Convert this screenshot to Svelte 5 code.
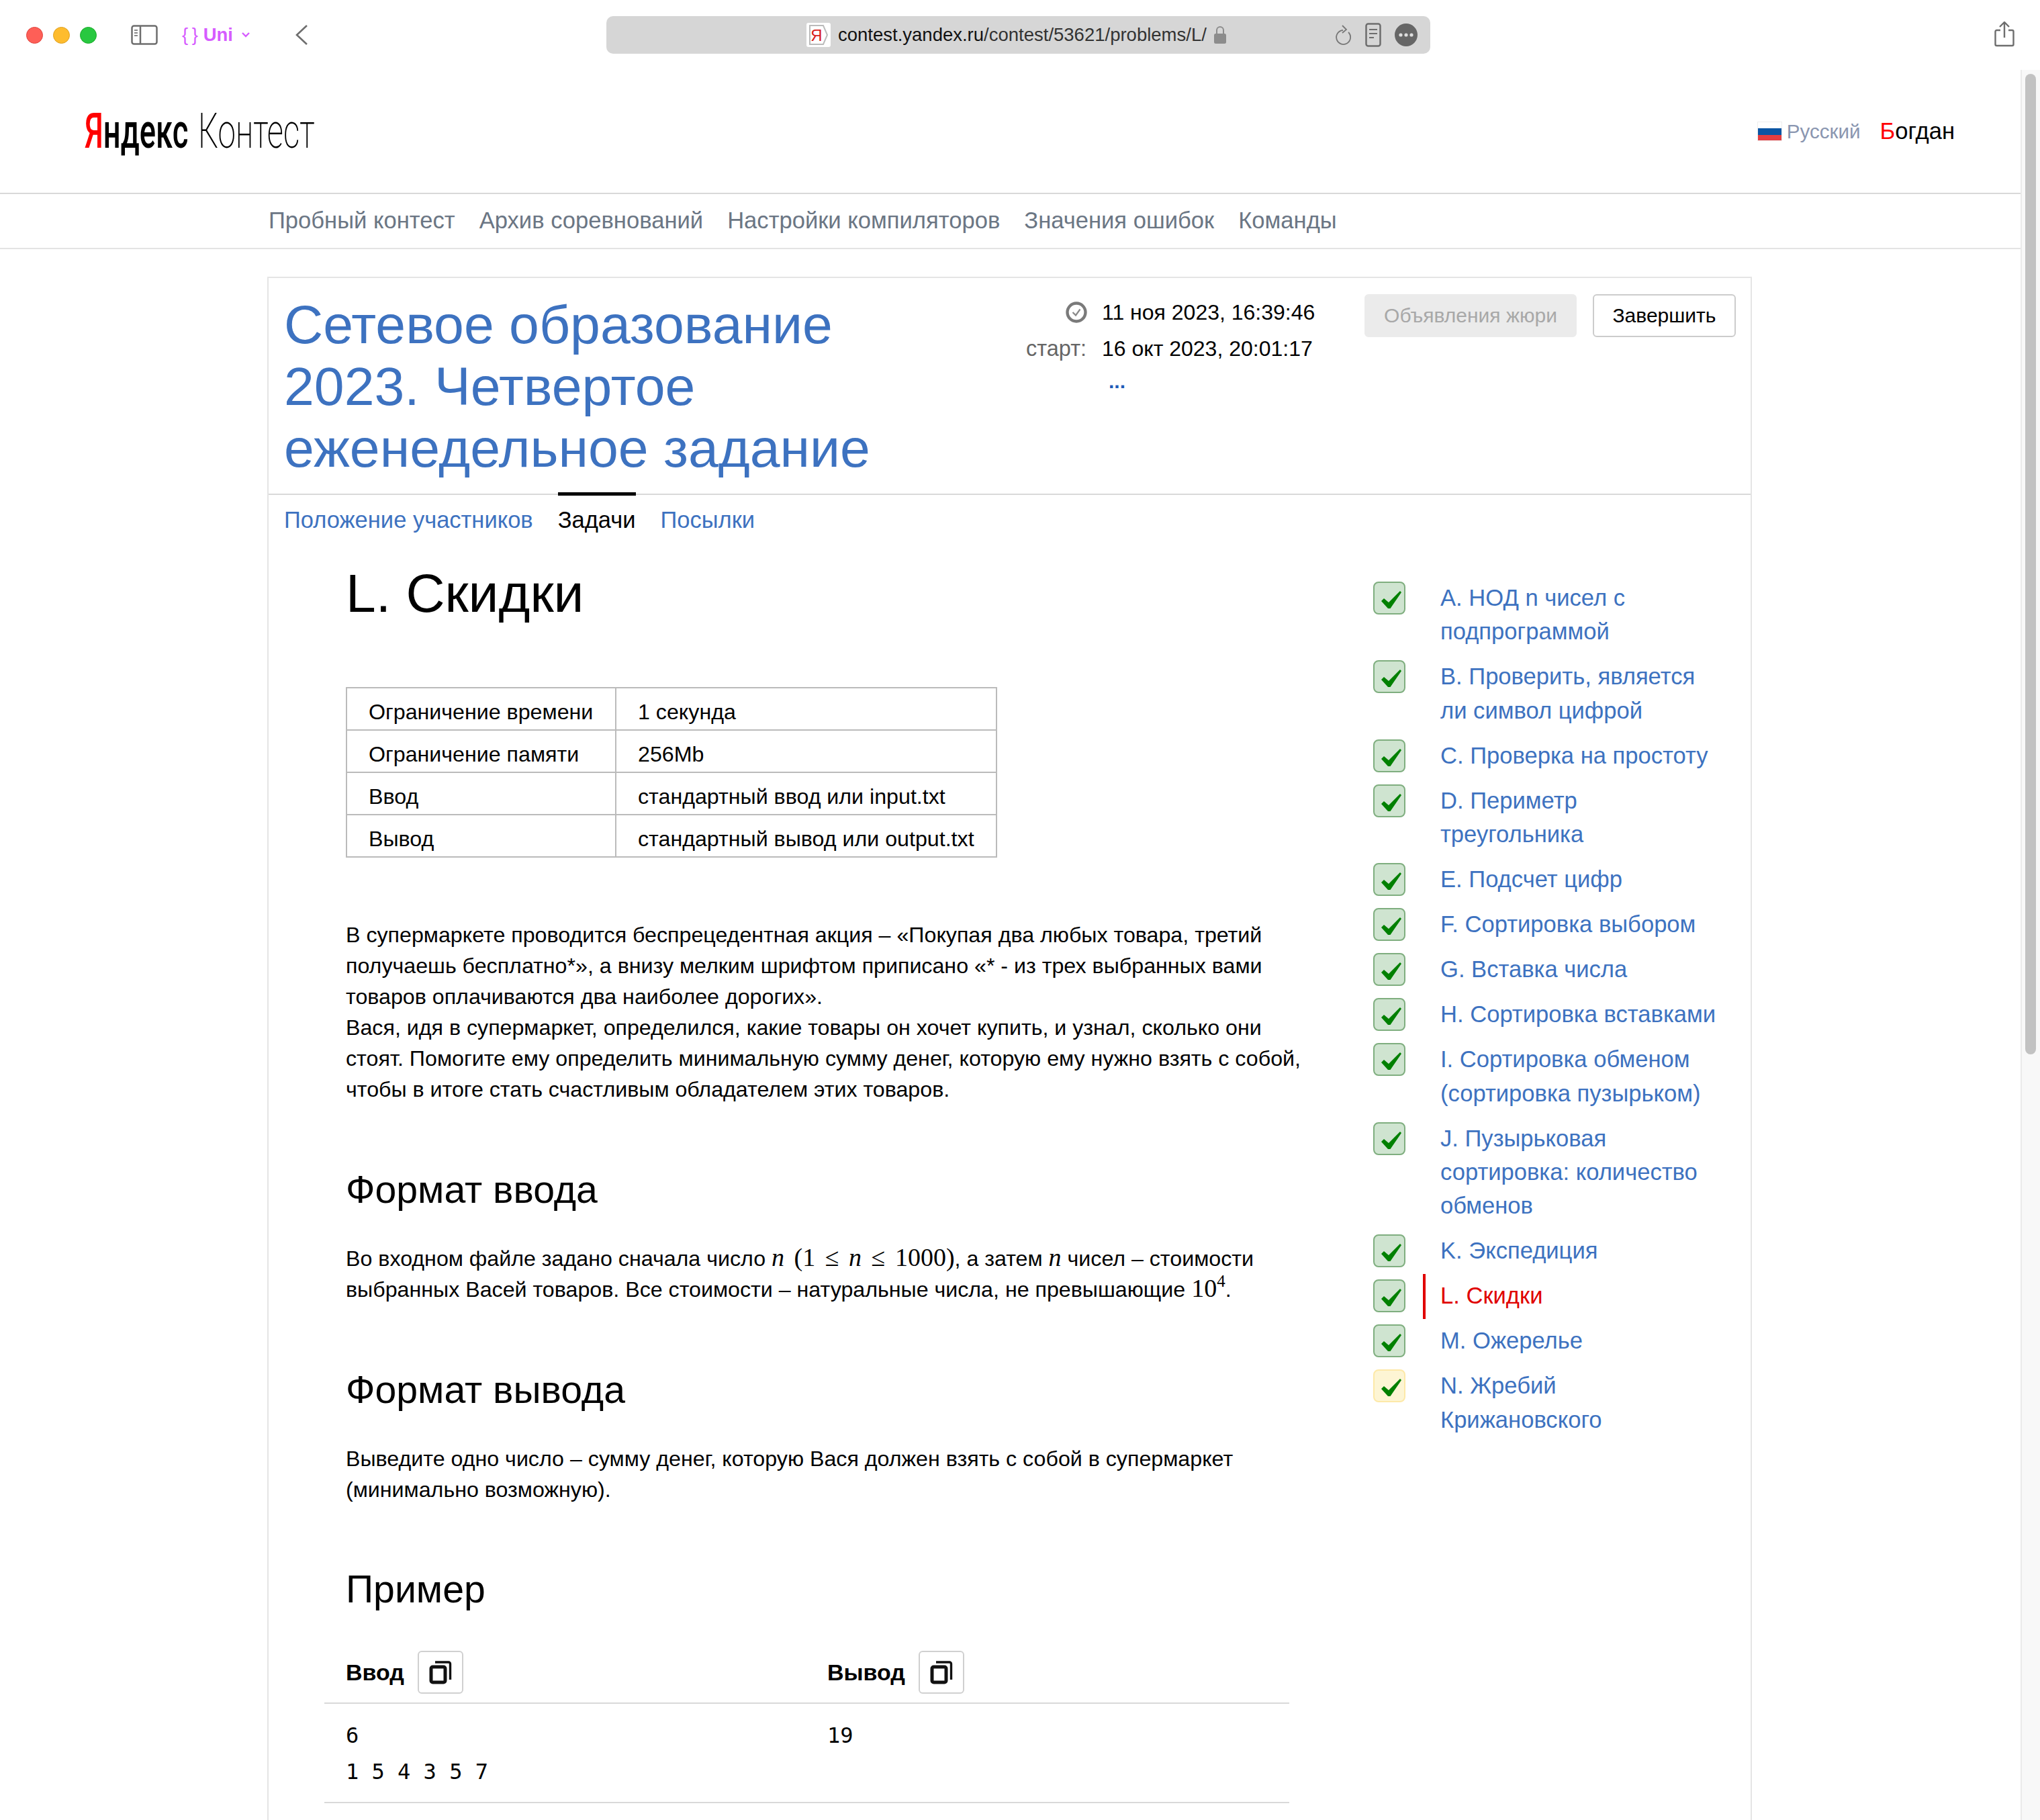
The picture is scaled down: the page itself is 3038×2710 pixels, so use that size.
<script>
  const items = [
    { t: ['A. НОД n чисел с', 'подпрограммой'] },
    { t: ['B. Проверить, является', 'ли символ цифрой'] },
    { t: ['C. Проверка на простоту'] },
    { t: ['D. Периметр', 'треугольника'] },
    { t: ['E. Подсчет цифр'] },
    { t: ['F. Сортировка выбором'] },
    { t: ['G. Вставка числа'] },
    { t: ['H. Сортировка вставками'] },
    { t: ['I. Сортировка обменом', '(сортировка пузырьком)'] },
    { t: ['J. Пузырьковая', 'сортировка: количество', 'обменов'] },
    { t: ['K. Экспедиция'] },
    { t: ['L. Скидки'], active: true },
    { t: ['M. Ожерелье'] },
    { t: ['N. Жребий', 'Крижановского'], warn: true }
  ];
  const nav = ['Пробный контест', 'Архив соревнований', 'Настройки компиляторов', 'Значения ошибок', 'Команды'];
  const limits = [
    ['Ограничение времени', '1 секунда'],
    ['Ограничение памяти', '256Mb'],
    ['Ввод', 'стандартный ввод или input.txt'],
    ['Вывод', 'стандартный вывод или output.txt']
  ];
</script>

<div class="window">
  <div class="chrome">
    <span class="light red"></span><span class="light amber"></span><span class="light green"></span>
    <svg class="sidebar-ico" viewBox="0 0 40 30" width="40" height="30"><rect x="1.5" y="1.5" width="37" height="27" rx="3" fill="none" stroke="#6e6e6e" stroke-width="2.5"/><path d="M14 2v26" stroke="#6e6e6e" stroke-width="2.5"/><path d="M5 8h5M5 12h5M5 16h5" stroke="#8a8a8a" stroke-width="2"/></svg>
    <span class="ext"><span class="brace">&#123; &#125;</span> Uni</span>
    <svg class="ext-chev" viewBox="0 0 14 10" width="14" height="10"><path d="M2 2l5 5 5-5" fill="none" stroke="#d65cff" stroke-width="2.4"/></svg>
    <svg class="back" viewBox="0 0 20 30" width="20" height="30"><path d="M18 1L3 15l15 14" fill="none" stroke="#6e6e6e" stroke-width="2.6"/></svg>
    <div class="address">
      <span class="favicon"><svg viewBox="0 0 30 32" width="30" height="32"><path d="M2 2h20l6 14-6 14H2z" fill="#fff" stroke="#bbb" stroke-width="2"/><text x="12" y="25" text-anchor="middle" class="fav-y">Я</text></svg></span>
      <span class="url"><span class="url-host">contest.yandex.ru</span>/contest/53621/problems/L/</span>
      <svg class="lock" viewBox="0 0 22 30" width="22" height="30"><path d="M6 14V8a5 5 0 0 1 10 0v6" fill="none" stroke="#8c8c8c" stroke-width="2"/><rect x="2" y="13" width="18" height="15" rx="2.5" fill="#8c8c8c"/></svg>
      <svg class="reload" viewBox="0 0 28 34" width="28" height="34"><path d="M20 12a10.500 10.500 0 1 1-8-3" fill="none" stroke="#777" stroke-width="1.8"/><path d="M11 2l6 6-6 5" fill="none" stroke="#777" stroke-width="1.8"/></svg>
      <svg class="reader" viewBox="0 0 24 36" width="24" height="36"><rect x="1.5" y="1.5" width="21" height="33" rx="3" fill="none" stroke="#6e6e6e" stroke-width="2.5"/><path d="M6 10h12M6 16h12M6 22h7" stroke="#6e6e6e" stroke-width="2"/></svg>
      <svg class="more" viewBox="0 0 34 34" width="34" height="34"><circle cx="17" cy="17" r="17" fill="#666"/><circle cx="9" cy="17" r="2.6" fill="#ddd"/><circle cx="17" cy="17" r="2.6" fill="#ddd"/><circle cx="25" cy="17" r="2.6" fill="#ddd"/></svg>
    </div>
    <svg class="share" viewBox="0 0 30 38" width="30" height="38"><path d="M9 13H3.500a2 2 0 0 0-2 2v19a2 2 0 0 0 2 2h23a2 2 0 0 0 2-2V15a2 2 0 0 0-2-2H21" fill="none" stroke="#6e6e6e" stroke-width="2.4"/><path d="M15 24V2M8 8l7-7 7 7" fill="none" stroke="#6e6e6e" stroke-width="2.4"/></svg>
  </div>

  <div class="viewport">
    <div class="page">
      <header class="top">
        <div class="logo"><span class="logo-ya"><span class="y">Я</span>ндекс</span><span class="logo-k">Контест</span></div>
        <div class="user">
          <svg class="flag" viewBox="0 0 37 29" width="37" height="29"><rect width="37" height="10" fill="#fff"/><rect y="10" width="37" height="10" fill="#0b55a3"/><rect y="20" width="37" height="9" fill="#e43d40"/><rect x=".5" y=".5" width="36" height="28" fill="none" stroke="#eee"/></svg>
          <span class="lang">Русский</span>
          <span class="name"><span class="y">Б</span>огдан</span>
        </div>
      </header>
      <nav class="nav">
        {#each nav as n}<span>{n}</span>{/each}
      </nav>

      <div class="card">
        <div class="head">
          <h1>Сетевое образование<br />2023. Четвертое<br />еженедельное задание</h1>
          <div class="dates">
            <svg class="clock" viewBox="0 0 32 32" width="32" height="32"><circle cx="16" cy="16" r="13.5" fill="none" stroke="#7a7a7a" stroke-width="4.4"/><path d="M10.500 16l4.500 4.500 6.500-9" fill="none" stroke="#888" stroke-width="2.2"/></svg>
            <span class="dv">11 ноя 2023, 16:39:46</span>
            <span class="dl">старт:</span>
            <span class="dv">16 окт 2023, 20:01:17</span>
            <span></span>
            <span class="dots">...</span>
          </div>
          <div class="actions">
            <button class="btn off">Объявления жюри</button>
            <button class="btn">Завершить</button>
          </div>
        </div>
        <div class="tabs">
          <a class="tab" href="#a">Положение участников</a>
          <a class="tab cur" href="#b">Задачи</a>
          <a class="tab" href="#c">Посылки</a>
        </div>

        <div class="body">
          <main class="main">
            <h2 class="ptitle">L. Скидки</h2>
            <table class="limits">
              <tbody>
                {#each limits as r}
                  <tr><td class="c1">{r[0]}</td><td>{r[1]}</td></tr>
                {/each}
              </tbody>
            </table>
            <p class="txt first">В супермаркете проводится беспрецедентная акция – «Покупая два любых товара, третий<br />получаешь бесплатно*», а внизу мелким шрифтом приписано «* - из трех выбранных вами<br />товаров оплачиваются два наиболее дорогих».<br />Вася, идя в супермаркет, определился, какие товары он хочет купить, и узнал, сколько они<br />стоят. Помогите ему определить минимальную сумму денег, которую ему нужно взять с собой,<br />чтобы в итоге стать счастливым обладателем этих товаров.</p>
            <h3>Формат ввода</h3>
            <p class="txt">Во входном файле задано сначала число <span class="m"><i>n</i> (1 ≤ <i>n</i> ≤ 1000)</span>, а затем <span class="m"><i>n</i></span> чисел – стоимости<br />выбранных Васей товаров. Все стоимости – натуральные числа, не превышающие <span class="m">10<sup>4</sup></span>.</p>
            <h3>Формат вывода</h3>
            <p class="txt">Выведите одно число – сумму денег, которую Вася должен взять с собой в супермаркет<br />(минимально возможную).</p>
            <h3>Пример</h3>
            <div class="sample">
              <div class="sample-head">
                <div class="sh"><b>Ввод</b><span class="copy"><svg viewBox="0 0 34 36" width="34" height="36"><rect x="3" y="10" width="21" height="23" rx="2.5" fill="none" stroke="#111" stroke-width="5"/><path d="M9 3h20a2.500 2.500 0 0 1 2.500 2.500V29" fill="none" stroke="#111" stroke-width="3.400"/></svg></span></div>
                <div class="sh"><b>Вывод</b><span class="copy"><svg viewBox="0 0 34 36" width="34" height="36"><rect x="3" y="10" width="21" height="23" rx="2.5" fill="none" stroke="#111" stroke-width="5"/><path d="M9 3h20a2.500 2.500 0 0 1 2.500 2.500V29" fill="none" stroke="#111" stroke-width="3.400"/></svg></span></div>
              </div>
              <div class="sample-body">
                <pre>6
1 5 4 3 5 7</pre>
                <pre>19</pre>
              </div>
            </div>
          </main>
          <aside class="side">
            {#each items as it}
              <div class="item">
                <span class="chk" class:warn={it.warn}><svg viewBox="0 0 30 26" width="30" height="26"><path d="M0 15L4 11L11 17L28 0L30 2L13.500 26H10Z" fill="#008000"/></svg></span>
                <a href="#p" class="lnk" class:active={it.active}>{#each it.t as l, i}{#if i}<br />{/if}{l}{/each}</a>
              </div>
            {/each}
          </aside>
        </div>
      </div>
    </div>
    <div class="scroll"><div class="thumb"></div></div>
  </div>
</div>

<style>
  :global(body) { margin: 0; background: #fff; }
  .window {
    width: 3038px; height: 2710px; overflow: hidden; display: flex; flex-direction: column;
    font-family: "Liberation Sans", Arial, sans-serif; color: #000; background: #fff;
  }
  .chrome { height: 104px; flex: none; display: flex; align-items: center; padding-left: 39px; box-sizing: border-box; position: relative; }
  .light { width: 25px; height: 25px; border-radius: 50%; margin-right: 15px; box-sizing: border-box; }
  .red { background: #fe5f57; border: 1px solid #e0443e; }
  .amber { background: #febc2e; border: 1px solid #dea123; }
  .green { background: #28c840; border: 1px solid #1aab29; }
  .sidebar-ico { margin-left: 36px; }
  .ext { margin-left: 36px; color: #d65cff; font-size: 27.5px; font-weight: 700; white-space: nowrap; }
  .brace { font-weight: 400; word-spacing: -2px; }
  .ext-chev { margin-left: 12px; }
  .back { margin-left: 66px; }
  .address {
    position: absolute; left: 903px; top: 24px; width: 1227px; height: 56px; background: #d6d6d6; border-radius: 10px;
    display: flex; align-items: center; padding-left: 298px; box-sizing: border-box;
  }
  .favicon { width: 36px; height: 36px; display: flex; align-items: center; justify-content: center; background: #fff; border-radius: 3px; }
  .fav-y { font: 24px "Liberation Sans", sans-serif; fill: #d8201b; }
  .url { margin-left: 11px; font-size: 27.5px; color: #333; white-space: nowrap; }
  .url-host { color: #111; }
  .lock { margin-left: 9px; }
  .reload { position: absolute; left: 1085px; top: 12px; }
  .reader { position: absolute; left: 1130px; top: 10px; }
  .more { position: absolute; left: 1174px; top: 11px; }
  .share { position: absolute; left: 2970px; top: 32px; }

  .viewport { flex: 1; display: flex; min-height: 0; }
  .page { width: 3009px; flex: none; }
  .scroll { flex: 1; background: #f8f8f8; border-left: 2px solid #eaeaea; padding: 6px 0 0 5px; box-sizing: border-box; }
  .thumb { width: 16px; height: 1460px; background: #c2c2c2; border-radius: 8px; }

  .top { height: 183px; display: flex; align-items: center; justify-content: space-between; padding: 0 98px 0 126px; box-sizing: border-box; }
  .logo { display: flex; font-family: Roboto, sans-serif; font-size: 72px; line-height: 1; height: 72px; white-space: nowrap; align-items: baseline; }
  .logo-ya { font-weight: 500; display: inline-block; transform: scaleX(.63); transform-origin: left; width: 169px; }
  .logo-k { font-weight: 200; display: inline-block; transform: scaleX(.66); transform-origin: left; }
  .y { color: #f00; }
  .user { display: flex; align-items: center; }
  .flag { margin-right: 7px; }
  .lang { font-size: 29.6px; color: #8a96b0; margin-right: 29px; }
  .name { font-size: 34.6px; }
  .nav {
    height: 84px; box-sizing: border-box; border-top: 2px solid #d9d9d9; border-bottom: 2px solid #e3e3e3;
    padding: 0 0 2px 400px; display: flex; gap: 36px; align-items: center; font-size: 34.6px; color: #6b7684;
  }

  .card { margin: 41px 0 0 398px; width: 2211px; border: 2px solid #e5e5e5; border-bottom: 0; box-sizing: border-box; height: 2400px; }
  .head { height: 323px; border-bottom: 2px solid #d9d9d9; display: flex; padding-left: 23px; position: relative; box-sizing: border-box; }
  h1 { margin: 23px 0 0 0; width: 1105px; font-size: 80.6px; line-height: 92px; font-weight: 400; color: #3d72c0; flex: none; }
  .dates {
    display: grid; grid-template-columns: 90px auto; column-gap: 23px; grid-auto-rows: 54px; margin-top: 24px; font-size: 32px; align-items: center; align-content: start; height: 160px;
  }
  .clock { justify-self: end; margin-right: -1px; }
  .dl { color: #666; text-align: right; font-size: 32.5px; }
  .dots { color: #1d5bb8; font-size: 30px; font-weight: 700; margin-left: 10px; margin-top: -10px; }
  .actions { position: absolute; top: 24px; right: 22px; display: flex; gap: 24px; }
  .btn { height: 64px; font: 30px "Liberation Sans", Arial, sans-serif; background: #fff; border: 2px solid #ccc; border-radius: 6px; width: 213px; padding: 0; color: #000; }
  .btn.off { width: 316px; background: #ebebeb; border-color: #ebebeb; color: #a8a8a8; }
  .tabs { display: flex; gap: 37px; padding-left: 23px; margin-top: -4px; position: relative; font-size: 34.5px; }
  .tab { color: #3d72c0; text-decoration: none; padding-top: 16px; border-top: 5px solid transparent; line-height: 40px; }
  .tab.cur { color: #000; border-top-color: #000; }

  .body { display: flex; padding-left: 115px; }
  .main { width: 1530px; flex: none; }
  .ptitle { margin: 43px 0 0; font-size: 80.4px; line-height: 92px; font-weight: 400; }
  .limits { border-collapse: collapse; margin: 94px 0 0 0; font-size: 32.2px; width: 970px; }
  .limits td { border: 2px solid #bbb; height: 63px; padding: 9px 0 0 32px; box-sizing: border-box; }
  .c1 { width: 401px; }
  .txt { margin: 0; font-size: 32.2px; line-height: 46.1px; white-space: nowrap; }
  .first { margin-top: 92px; }
  h3 { margin: 93.5px 0 0; font-size: 57.2px; line-height: 64px; font-weight: 400; }
  h3 + .txt { margin-top: 48px; }
  .m { font-family: "Liberation Serif", serif; font-size: 38px; line-height: 0; word-spacing: 5px; }
  sup { font-size: 25px; line-height: 0; vertical-align: 15px; }
  .sample { margin: 60px 0 0 -32px; width: 1437px; }
  .sample-head { display: flex; border-bottom: 2px solid #d9d9d9; height: 79px; padding-left: 32px; box-sizing: border-box; }
  .sh { width: 718px; display: flex; gap: 20px; height: 64px; align-items: center; }
  .sh + .sh { margin-left: 29px; }
  .sh b { font-size: 34px; }
  .copy { width: 68px; height: 64px; box-sizing: border-box; border: 2px solid #d0d0d0; border-radius: 6px; display: flex; align-items: center; justify-content: center; }
  .sample-body { display: flex; border-bottom: 2px solid #d9d9d9; padding: 20px 0 20px 32px; height: 148px; box-sizing: border-box; }
  pre { margin: 0; width: 718px; font: 32px/54px "DejaVu Sans Mono", monospace; }
  pre + pre { margin-left: 29px; }

  .side { padding-top: 64px; }
  .item { display: flex; padding: 8px 0 8.6px; position: relative; }
  .chk { width: 48px; height: 49px; box-sizing: border-box; background: #cfe4d0; border: 2px solid #7fae7f; border-radius: 8px; display: flex; align-items: flex-start; justify-content: flex-start; padding: 12px 0 0 10px; flex: none; }
  .chk.warn { background: #fdf5d4; border-color: #fde9a8; }
  .lnk { margin: -1px 0 1px 52px; font-size: 34.6px; line-height: 50.4px; color: #3d72c0; text-decoration: none; white-space: nowrap; }
  .lnk.active { color: #e00000; }
  .lnk.active::before { content: ""; position: absolute; left: 74px; top: 0; bottom: 0; width: 4px; background: #e00000; }
</style>
